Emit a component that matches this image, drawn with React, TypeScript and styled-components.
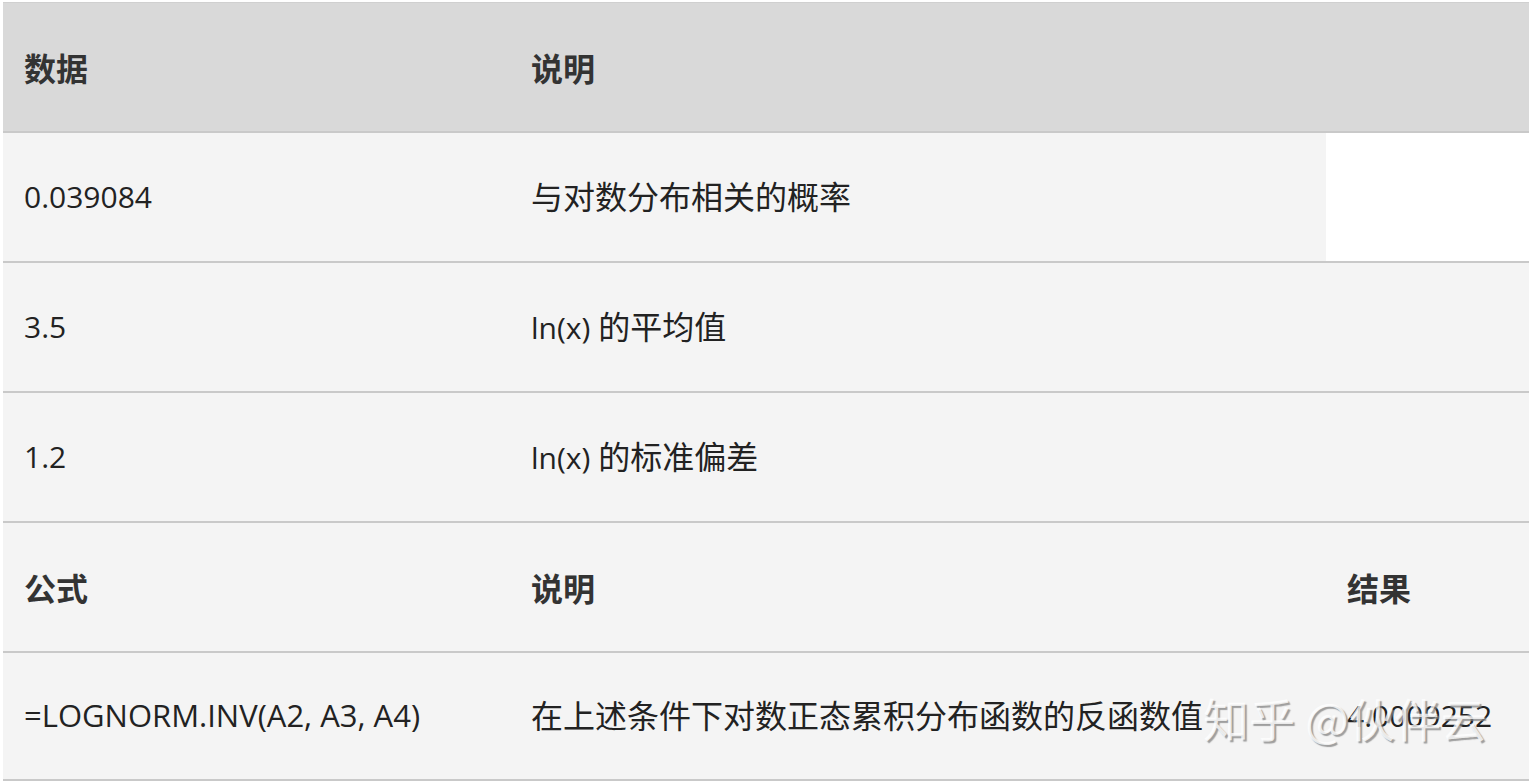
import styled, { createGlobalStyle } from "styled-components";

const GlobalStyle = createGlobalStyle`
  html, body {
    margin: 0;
    padding: 0;
    background: #ffffff;
  }
  body {
    font-family: "Open Sans", "Noto Sans CJK SC", sans-serif;
    color: #222222;
  }
`;

const Page = styled.div`
  padding: 2px 0 0 3px;
  position: relative;
  width: 1526px;
  overflow: hidden;
`;

const Table = styled.table`
  width: 100%;
  border-collapse: collapse;
  table-layout: fixed;
  border-top: 1px solid #d0d0d0;
`;

const Row = styled.tr<{ $head?: boolean; $h?: number }>`
  height: ${(p) => p.$h ?? 130}px;
  background: ${(p) => (p.$head ? "#d9d9d9" : "#f4f4f4")};
  border-bottom: 2px solid #c9c9c9;
`;

const Cell = styled.td<{ $blank?: boolean }>`
  padding: 0 0 0 21px;
  vertical-align: middle;
  font-size: 30px;
  line-height: 40px;
  white-space: nowrap;
  color: #222222;
  background: ${(p) => (p.$blank ? "#ffffff" : "transparent")};
`;

const HeadCell = styled(Cell)`
  font-family: "Noto Sans CJK SC", sans-serif;
  font-weight: 700;
  font-size: 32px;
  color: #333333;
`;

const Cjk = styled.span`
  font-family: "Noto Sans CJK SC", sans-serif;
  font-size: 32px;
`;

const Formula = styled.span`
  font-size: 31px;
`;

const Watermark = styled.div`
  position: absolute;
  left: 1203px;
  top: 692px;
  font-family: "Noto Sans CJK SC", sans-serif;
  font-size: 46px;
  line-height: 50px;
  color: rgba(255, 255, 255, 0.8);
  text-shadow: 2px 2px 1px rgba(130, 130, 130, 0.75);
  white-space: pre;
  pointer-events: none;
`;

const data = [
  { value: "0.039084", latin: "", cjk: "与对数分布相关的概率", blank: true },
  { value: "3.5", latin: "ln(x) ", cjk: "的平均值", blank: false },
  { value: "1.2", latin: "ln(x) ", cjk: "的标准偏差", blank: false },
];

export default function App() {
  return (
    <>
      <GlobalStyle />
      <Page>
        <Table>
          <colgroup>
            <col style={{ width: 507 }} />
            <col style={{ width: 816 }} />
            <col />
          </colgroup>
          <tbody>
            <Row $head $h={129}>
              <HeadCell>数据</HeadCell>
              <HeadCell>说明</HeadCell>
              <HeadCell />
            </Row>
            {data.map((d) => (
              <Row key={d.value}>
                <Cell>{d.value}</Cell>
                <Cell>
                  {d.latin}
                  <Cjk>{d.cjk}</Cjk>
                </Cell>
                <Cell $blank={d.blank} />
              </Row>
            ))}
            <Row>
              <HeadCell>公式</HeadCell>
              <HeadCell>说明</HeadCell>
              <HeadCell>结果</HeadCell>
            </Row>
            <Row $h={128}>
              <Cell>
                <Formula>=LOGNORM.INV(A2, A3, A4)</Formula>
              </Cell>
              <Cell>
                <Cjk>在上述条件下对数正态累积分布函数的反函数值</Cjk>
              </Cell>
              <Cell>4.0009252</Cell>
            </Row>
          </tbody>
        </Table>
        <Watermark>知乎 @伙伴云</Watermark>
      </Page>
    </>
  );
}
